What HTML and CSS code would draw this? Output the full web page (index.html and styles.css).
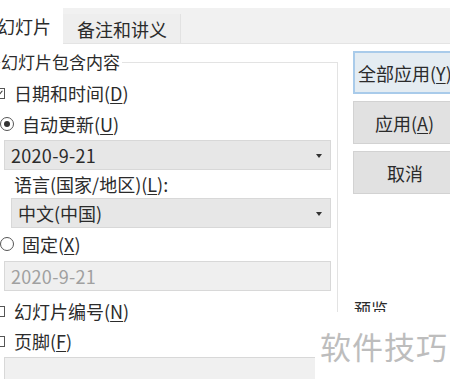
FILE: index.html
```html
<!DOCTYPE html>
<html lang="zh-CN">
<head>
  <meta charset="UTF-8">
  <title>页眉和页脚</title>
  <link rel="stylesheet" href="styles.css">
</head>
<body>
  <div class="tabs">
    <div class="tab active">幻灯片</div>
    <div class="tab">备注和讲义</div>
  </div>

  <div class="main">
    <fieldset class="group">
      <legend>幻灯片包含内容</legend>

      <div class="row check-row first"><span class="box checked"></span>日期和时间(<u>D</u>)</div>
      <div class="row radio-row"><span class="radio on"></span>自动更新(<u>U</u>)</div>
      <div class="select wide">2020-9-21<span class="caret"></span></div>
      <div class="row lang">语言(国家/地区)(<u>L</u>):</div>
      <div class="select narrow">中文(中国)<span class="caret"></span></div>
      <div class="row radio-row"><span class="radio"></span>固定(<u>X</u>)</div>
      <div class="field disabled">2020-9-21</div>
      <div class="row check-row gap"><span class="box"></span>幻灯片编号(<u>N</u>)</div>
      <div class="row check-row"><span class="box"></span>页脚(<u>F</u>)</div>
      <div class="field footer-field"></div>
    </fieldset>

    <div class="side">
      <button class="btn default">全部应用(<u>Y</u>)</button>
      <button class="btn">应用(<u>A</u>)</button>
      <button class="btn">取消</button>
      <div class="preview">预览</div>
    </div>
  </div>

  <div class="watermark">软件技巧</div>
</body>
</html>
```

FILE: styles.css
```css
html { overflow:hidden; }
body { margin:0; width:450px; height:379px; overflow:hidden; background:#fff; position:relative; font-family:"Noto Sans CJK SC", "Noto Sans", sans-serif; font-size:18px; color:#2b2b2b; }
u { text-decoration-thickness:1px; text-underline-offset:2px; }

.tabs { display:flex; margin-top:8px; height:35px; background:#f1f1f1; border-bottom:1px solid #e4e4e4; }
.tab { display:flex; align-items:center; font-size:18px; }
.tab.active { background:#fff; width:63px; height:36px; text-indent:-3px; }
.tab:not(.active) { margin-top:6px; height:29px; padding:0 13px 0 14px; background:#eeeeee; border-right:1px solid #e2e2e2; }

.main { display:flex; height:335px; }
.group { margin:8px 0 0 -10px; padding:0 6px 0 16px; width:325px; height:330px; border:1px solid #e3e3e3; border-bottom:none; }
.group legend { padding:0 2px 0 0; margin-left:-6px; font-size:17px; line-height:20px; }

.row { display:flex; align-items:center; }
.check-row { height:30px; margin-left:-13px; }
.radio-row { height:32px; margin-left:-7px; }
.first { margin-top:6px; }
.gap { margin-top:5px; }
.lang { height:28px; margin-left:7px; }

.box { width:9px; height:9px; border:1px solid #555; margin-right:9px; position:relative; }
.box.checked::after { content:""; position:absolute; left:2px; top:0px; width:3px; height:6px; border:solid #333; border-width:0 1px 1px 0; transform:rotate(40deg); }
.radio { width:12px; height:12px; border:1px solid #555; border-radius:50%; margin-right:8px; position:relative; }
.radio.on::after { content:""; position:absolute; left:3px; top:3px; width:6px; height:6px; border-radius:50%; background:#333; }

.select, .field { height:28px; border:1px solid #d8d8d8; background:#e7e7e7; display:flex; align-items:center; padding-left:6px; position:relative; box-sizing:content-box; }
.wide { margin-left:-3px; width:319px; letter-spacing:0.3px; }
.narrow { margin-left:4px; width:312px; }
.caret { position:absolute; right:8px; top:13px; border:3px solid transparent; border-top:4px solid #333; }
.disabled { margin:1px 0 0 -3px; width:319px; color:#a0a0a0; background:#efefef; letter-spacing:0.3px; }
.footer-field { margin:1px 0 0 -3px; width:319px; background:#f0f0f0; }

.side { margin-left:15px; padding-top:7px; display:flex; flex-direction:column; gap:7px; }
.btn { width:112px; height:43px; font-family:inherit; font-size:18px; color:#2b2b2b; background:#e1e1e1; border:1px solid #d2d2d2; text-align:left; padding:0 0 0 21px; }
.btn.default { background:#e4ecf2; border:2px solid #a9cbea; padding-left:3px; }
.btn:last-of-type { padding-left:33px; }
.preview { margin-top:95px; margin-left:1px; font-size:17px; }

.watermark { position:absolute; left:315px; top:312px; width:135px; height:67px; background:#fff; color:#bdbdbd; font-size:31px; display:flex; align-items:center; padding-left:5px; letter-spacing:1px; }
```
